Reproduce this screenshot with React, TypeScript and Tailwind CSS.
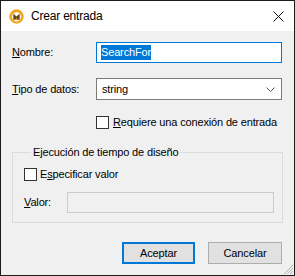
import React from "react";

const AppIcon = () => (
  <svg width="15" height="15" viewBox="0 0 15 15">
    <circle cx="7.5" cy="7.5" r="7.2" fill="#f3a51b" />
    <circle cx="7.5" cy="7.8" r="4.6" fill="#fff" />
    <path d="M4.3 4.6 L7.5 7.6 L10.7 4.6 L10.7 10.8 L4.3 10.8 Z" fill="#6b4510" />
    <path d="M6.2 10.8 L7.5 8.8 L8.8 10.8 Z" fill="#f3a51b" />
  </svg>
);

const Checkbox = () => (
  <span className="w-[13px] h-[13px] border border-[#333] bg-white shrink-0" />
);

export default function App() {
  return (
    <div className="w-[295px] h-[276px] border border-[#1c1c1c] bg-[#f0f0f0] flex flex-col font-['Liberation_Sans',Arial,sans-serif] text-[11px] tracking-[-0.15px] text-black leading-[15px] whitespace-nowrap">
      {/* title bar */}
      <div className="h-[30px] bg-white flex items-center pl-[8px] pr-[10px] shrink-0">
        <AppIcon />
        <span className="ml-[7px] text-[12px] tracking-[-0.2px]">Crear entrada</span>
        <svg className="ml-auto" width="11" height="11" viewBox="0 0 11 11">
          <path d="M0.5 0.5 L10.5 10.5 M10.5 0.5 L0.5 10.5" stroke="#111" strokeWidth="1" />
        </svg>
      </div>

      <div className="flex-1 flex flex-col px-[11px] relative">
        <div className="mt-[11px] flex items-center">
          <label className="w-[84px]">
            <u>N</u>ombre:
          </label>
          <div className="w-[186px] h-[21px] border border-[#0078d7] bg-white flex items-center pl-[4px]">
            <span className="bg-[#0078d7] text-white">SearchFor</span>
          </div>
        </div>

        <div className="mt-[15px] flex items-center">
          <label className="w-[84px]">
            <u>T</u>ipo de datos:
          </label>
          <div className="w-[186px] h-[22px] border border-[#7a7a7a] bg-white flex items-center pl-[5px] pr-[6px]">
            <span>string</span>
            <svg className="ml-auto" width="9" height="5" viewBox="0 0 9 5">
              <path d="M0.5 0.5 L4.5 4.5 L8.5 0.5" stroke="#555" fill="none" />
            </svg>
          </div>
        </div>

        <div className="mt-[16px] flex items-center pl-[84px] gap-[4px] h-[13px]">
          <Checkbox />
          <span>
            <u>R</u>equiere una conexión de entrada
          </span>
        </div>

        <fieldset className="mt-[16px] border border-[#dcdcdc] pl-[11px] pr-[8px] pb-[9px]">
          <legend className="ml-[7px] px-[2px] leading-[15px]">Ejecución de tiempo de diseño</legend>
          <div className="mt-[8px] flex items-center gap-[3px] h-[13px]">
            <Checkbox />
            <span>
              E<u>s</u>pecificar valor
            </span>
          </div>
          <div className="mt-[11px] flex items-center">
            <label className="w-[43px]">
              <u>V</u>alor:
            </label>
            <div className="w-[207px] h-[21px] border border-[#cccccc] bg-[#f0f0f0]" />
          </div>
        </fieldset>

        <div className="mt-[19px] flex justify-end gap-[13px] pr-[1px]">
          <button className="w-[73px] h-[22px] border-2 border-[#0078d7] bg-[#e1e1e1]">Aceptar</button>
          <button className="w-[74px] h-[22px] border border-[#adadad] bg-[#e1e1e1]">Cancelar</button>
        </div>

        <svg className="absolute right-0 bottom-0" width="12" height="12" viewBox="0 0 12 12">
          <path d="M11 2 L2 11 M11 5 L5 11 M11 8 L8 11" stroke="#b5b5b5" strokeWidth="1" />
        </svg>
      </div>
    </div>
  );
}
